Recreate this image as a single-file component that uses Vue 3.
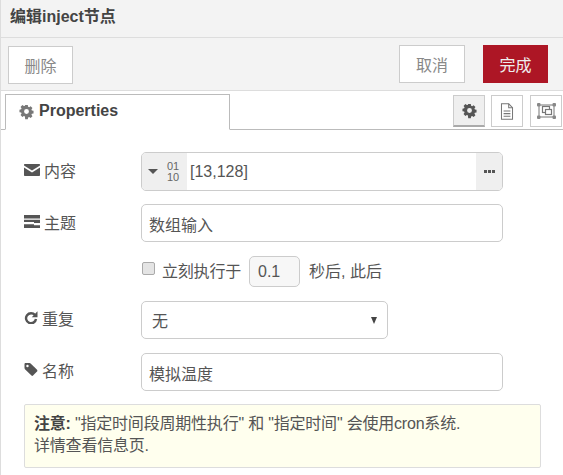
<template>
  <div class="tray">
    <header class="tray-title">编辑inject节点</header>

    <div class="tray-toolbar">
      <button class="btn">删除</button>
      <div class="spacer"></div>
      <button class="btn">取消</button>
      <button class="btn primary">完成</button>
    </div>

    <div class="tabs-row">
      <div class="tab">
        <svg class="tab-icon" viewBox="0 0 24 24"><path :d="gear" /></svg>
        <span>Properties</span>
      </div>
      <div class="tab-buttons">
        <button class="icon-btn selected">
          <svg class="btn-gear" viewBox="0 0 24 24"><path :d="gear" /></svg>
        </button>
        <button class="icon-btn">
          <svg class="btn-doc" viewBox="0 0 16 20">
            <path d="M1.5 1h8.5l4.500 4.500v13.500h-13z" fill="#fff" stroke="#777" stroke-width="1.200" />
            <path d="M10 1v4.500h4.500M4 9.500h8M4 12.500h8M4 15.500h8" fill="none" stroke="#777" stroke-width="1.200" />
          </svg>
        </button>
        <button class="icon-btn frame-btn">
          <svg class="btn-frame" viewBox="0 0 19 16">
            <rect x="2" y="2" width="15" height="12" fill="none" stroke="#777" />
            <rect x="5.500" y="3.500" width="7" height="6" fill="none" stroke="#777" stroke-width="1.200" />
            <rect x="8.500" y="6.500" width="6" height="5" fill="#fff" stroke="#777" stroke-width="1.200" />
            <rect x="0" y="0" width="3.500" height="3.500" rx="1" fill="#888" />
            <rect x="15.500" y="0" width="3.500" height="3.500" rx="1" fill="#888" />
            <rect x="0" y="12.500" width="3.500" height="3.500" rx="1" fill="#888" />
            <rect x="15.500" y="12.500" width="3.500" height="3.500" rx="1" fill="#888" />
          </svg>
        </button>
      </div>
    </div>

    <form class="form" @submit.prevent>
      <div class="row row-payload">
        <label class="label">
          <svg class="icon envelope" viewBox="0 0 16 12">
            <path d="M0 1C0 .4.400 0 1 0h14c.6 0 1 .4 1 1v.6L8 6.600 0 1.600z" />
            <path d="M0 3.400V11c0 .6.400 1 1 1h14c.6 0 1-.4 1-1V3.400L8 8.400z" />
          </svg>
          内容
        </label>
        <div class="typed-input">
          <div class="type-select">
            <span class="caret"></span>
            <span class="bin"><span>01</span><span>10</span></span>
          </div>
          <span class="typed-value">[13,128]</span>
          <div class="expand"><i></i><i></i><i></i></div>
        </div>
      </div>

      <div class="row row-topic">
        <label class="label">
          <svg class="icon" viewBox="0 0 16 13">
            <path d="M0 0h16v3.500H0zM0 4.700h16V8h-6V6.900H0zM0 9.200h10v1.100h6V13H0z" />
          </svg>
          主题
        </label>
        <input class="input wide" value="数组输入" />
      </div>

      <div class="row row-once">
        <span class="check"></span>
        <span class="once-text">立刻执行于</span>
        <input class="input small" value="0.1" />
        <span class="once-after">秒后, 此后</span>
      </div>

      <div class="row row-repeat">
        <label class="label">
          <svg class="icon repeat-icon" viewBox="0 0 14 14">
            <path d="M11.300 4.400A5.400 5.400 0 1 0 12.400 8.600" fill="none" stroke="#555" stroke-width="2.600" />
            <path d="M14 .4V6.600H7.800z" />
          </svg>
          重复
        </label>
        <div class="select">
          <span>无</span>
          <span class="select-caret"></span>
        </div>
      </div>

      <div class="row row-name">
        <label class="label">
          <svg class="icon tag-icon" viewBox="0 0 14 14">
            <path d="M0 1.200C0 .5.500 0 1.200 0h4.300c.4 0 .8.200 1.100.5l6.900 6.900c.5.500.5 1.200 0 1.700l-4.300 4.400c-.5.500-1.200.5-1.700 0L.5 6.600C.2 6.300 0 5.900 0 5.500zM3.200 4.500a1.300 1.300 0 1 0 0-2.600 1.300 1.300 0 0 0 0 2.600z" fill-rule="evenodd" />
          </svg>
          名称
        </label>
        <input class="input wide" value="模拟温度" />
      </div>

      <div class="tip">
        <b>注意:</b> "指定时间段周期性执行" 和 "指定时间" 会使用cron系统.<br />详情查看信息页.
      </div>
    </form>
  </div>
</template>

<script setup>
const gear =
  "M9.600 0h4.800l.6 3.200c.7.200 1.300.5 1.900.8l2.700-1.900 3.400 3.400-1.900 2.700c.3.600.6 1.200.8 1.900l3.100.6v4.800l-3.100.6c-.2.700-.5 1.300-.8 1.900l1.900 2.700-3.400 3.400-2.700-1.900c-.6.300-1.200.6-1.900.8l-.6 3.100H9.600L9 20.900c-.7-.2-1.300-.5-1.900-.8l-2.700 1.900L1 18.600l1.900-2.700c-.3-.6-.6-1.200-.8-1.900L-1 13.400V8.600l3.100-.6c.2-.7.5-1.300.8-1.900L1 3.500 4.400.1l2.700 1.900c.6-.3 1.200-.6 1.900-.8zM12 7.500a4 4 0 1 0 0 9 4 4 0 0 0 0-9z";
</script>

<style>
html,
body {
  margin: 0;
  background: #fff;
}
</style>

<style scoped>
.tray {
  width: 563px;
  height: 475px;
  overflow: hidden;
  font-family: "Liberation Sans", "Noto Sans CJK SC", sans-serif;
  font-size: 16px;
  color: #555;
  box-sizing: border-box;
  border-left: 1px solid #ddd;
}

.tray-title {
  height: 38px;
  box-sizing: border-box;
  padding: 7px 0 0 9px;
  background: #f3f3f3;
  border-bottom: 1px solid #ddd;
  font-weight: bold;
  line-height: 20px;
  color: #444;
}

.tray-toolbar {
  height: 53px;
  box-sizing: border-box;
  display: flex;
  align-items: flex-start;
  gap: 18px;
  padding: 7px 15px 0 7px;
  background: #f3f3f3;
  border-bottom: 1px solid #ddd;
}

.spacer {
  flex: 1;
}

.btn {
  width: 66px;
  height: 38px;
  box-sizing: border-box;
  background: #fff;
  border: 1px solid #ccc;
  color: #888;
  font: inherit;
  padding: 0;
}

.tray-toolbar .btn:first-child {
  width: 65px;
  margin-top: 1px;
}

.btn.primary {
  width: 65px;
  background: #ad1625;
  border-color: #ad1625;
  color: #eee;
}

.tabs-row {
  height: 39px;
  box-sizing: border-box;
  display: flex;
  justify-content: space-between;
  align-items: flex-end;
  padding: 0 1px 0 4px;
  border-bottom: 1px solid #bbb;
}

.tab {
  width: 225px;
  height: 36px;
  box-sizing: border-box;
  margin-bottom: -1px;
  background: #fff;
  border: 1px solid #bbb;
  border-bottom: 1px solid #fff;
  padding: 0 0 2px 14px;
  display: flex;
  align-items: center;
  gap: 6px;
  font-weight: bold;
  color: #444;
}

.tab-icon {
  width: 13px;
  height: 13px;
  fill: #777;
  overflow: visible;
}

.tab-buttons {
  display: flex;
  gap: 6px;
  align-self: flex-start;
  margin-top: 4px;
}

.icon-btn {
  width: 32px;
  height: 32px;
  box-sizing: border-box;
  background: #fff;
  border: 1px solid #ccc;
  padding: 0;
  display: flex;
  align-items: center;
  justify-content: center;
}

.frame-btn {
  margin-left: 1px;
}

.icon-btn.selected {
  background: #efefef;
  border-bottom: 2px solid #aaa;
}

.btn-gear {
  width: 13px;
  height: 13px;
  fill: #555;
  overflow: visible;
}

.btn-doc {
  width: 14px;
  height: 17px;
}

.btn-frame {
  width: 19px;
  height: 16px;
}

.form {
  padding: 22px 0 0 23px;
}

.row {
  display: flex;
  align-items: center;
}

.label {
  width: 117px;
  flex: none;
  display: flex;
  align-items: center;
  gap: 4px;
  color: #555;
}

.icon {
  width: 16px;
  height: 13px;
  fill: #555;
  flex: none;
}

.icon.envelope {
  height: 12px;
}

.repeat-icon {
  width: 14px;
  height: 13px;
}

.tag-icon {
  width: 14px;
  height: 13px;
}

.row-payload .label,
.row-topic .label {
  margin-top: -3px;
}

.row-repeat .label,
.row-name .label {
  margin-top: -5px;
}

.typed-input {
  width: 362px;
  height: 39px;
  box-sizing: border-box;
  border: 1px solid #ccc;
  border-radius: 5px;
  display: flex;
  align-items: center;
  overflow: hidden;
}

.type-select {
  width: 45px;
  align-self: stretch;
  background: #efefef;
  display: flex;
  align-items: center;
  flex: none;
  padding-left: 6px;
  box-sizing: border-box;
}

.caret {
  width: 0;
  height: 0;
  border-left: 5px solid transparent;
  border-right: 5px solid transparent;
  border-top: 5px solid #555;
  margin-right: 9px;
}

.bin {
  display: flex;
  flex-direction: column;
  font-size: 11px;
  line-height: 11px;
  color: #666;
}

.typed-value {
  flex: 1;
  padding-left: 3px;
  color: #555;
}

.expand {
  width: 26px;
  align-self: stretch;
  background: #efefef;
  display: flex;
  align-items: center;
  justify-content: center;
  gap: 1px;
  flex: none;
}

.expand i {
  width: 3px;
  height: 3px;
  background: #555;
}

.input {
  box-sizing: border-box;
  border: 1px solid #ccc;
  border-radius: 5px;
  font: inherit;
  color: #555;
  outline: none;
  background: #fff;
}

.input.wide {
  width: 362px;
  height: 38px;
  padding: 2px 7px 0;
}

.row-topic {
  margin-top: 13px;
}

.row-once {
  margin-top: 14px;
  padding-left: 118px;
  height: 31px;
}

.check {
  width: 11px;
  height: 11px;
  border: 1px solid #aaa;
  border-radius: 2px;
  background: #e4e4e4;
  margin-top: -6px;
  flex: none;
}

.once-text {
  margin-left: 7px;
  margin-top: -4px;
  letter-spacing: -0.2px;
}

.input.small {
  width: 51px;
  height: 31px;
  margin-left: 8px;
  padding: 0 8px;
  background: #f7f7f7;
}

.once-after {
  margin-left: 9px;
  margin-top: -4px;
}

.row-repeat {
  margin-top: 14px;
}

.select {
  width: 247px;
  height: 38px;
  box-sizing: border-box;
  border: 1px solid #ccc;
  border-radius: 5px;
  display: flex;
  align-items: center;
  justify-content: space-between;
  padding: 0 10px;
}

.select-caret {
  width: 0;
  height: 0;
  border-left: 3.500px solid transparent;
  border-right: 3.500px solid transparent;
  border-top: 7px solid #444;
}

.row-name {
  margin-top: 14px;
}

.tip {
  width: 517px;
  height: 64px;
  box-sizing: border-box;
  margin-top: 13px;
  background: #ffe;
  border: 1px solid #ddd;
  border-radius: 2px;
  padding: 8px 9px;
  line-height: 22px;
  letter-spacing: -0.2px;
  color: #555;
}

.tip b {
  color: #444;
}
</style>
